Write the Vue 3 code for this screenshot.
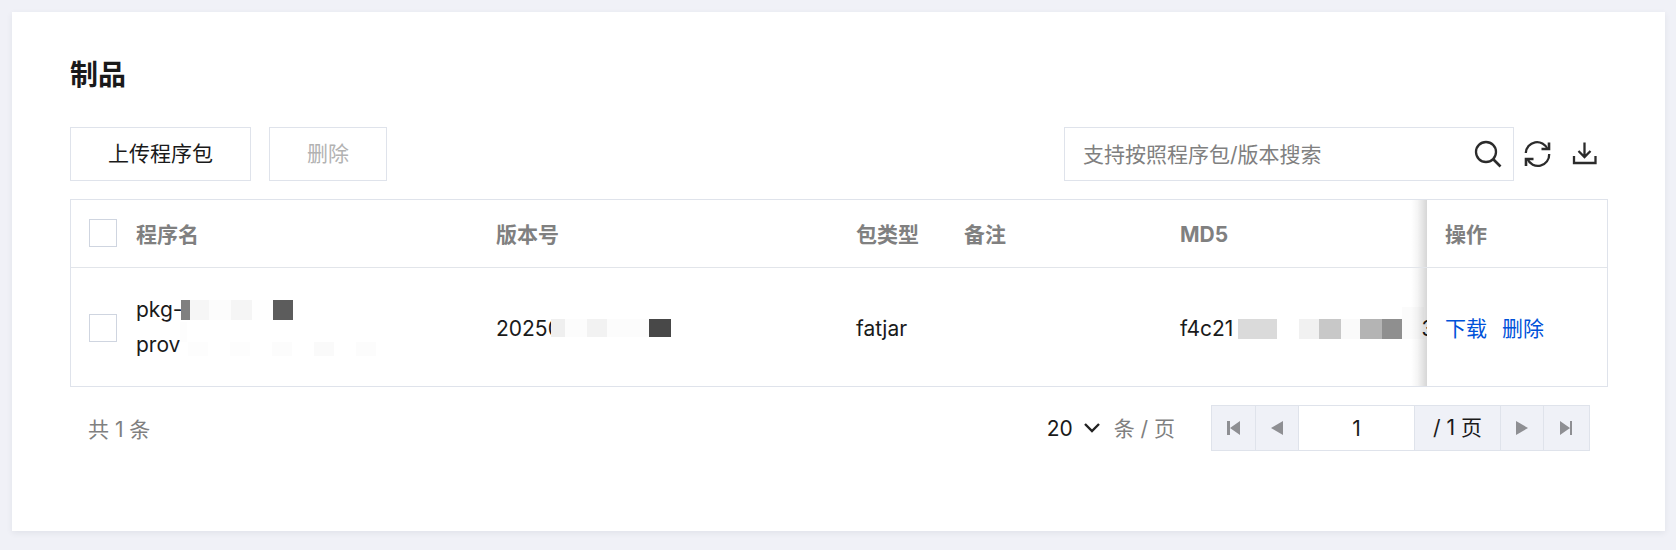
<script setup>
import { ref } from 'vue'

const keyword = ref('')
const page = ref('1')
const pageSize = ref('20')

// Pixel masks over private values: x, y, width, height, fill
const nameMask = [
  [0, 0, 9, 20, '#808080'],
  [9, 0, 19, 20, '#f6f6f6'],
  [28, 0, 22, 20, '#fcfcfc'],
  [50, 0, 21, 20, '#f5f5f5'],
  [71, 0, 21, 20, '#fefefe'],
  [92, 0, 20, 20, '#5c5c5c']
]
const providerMask = [
  [0, 0, 7, 20, '#fdfdfd'],
  [8, 20, 20, 14, '#fdfdfd'],
  [50, 20, 20, 14, '#fdfdfd'],
  [92, 20, 20, 14, '#fcfcfc'],
  [134, 20, 20, 14, '#fafafa'],
  [176, 20, 20, 14, '#fcfcfc']
]
const versionMask = [
  [0, 0, 14, 18, '#efefef'],
  [14, 0, 22, 18, '#fcfcfc'],
  [36, 0, 20, 18, '#f2f2f2'],
  [56, 0, 42, 18, '#fcfcfc'],
  [98, 0, 22, 18, '#484848']
]
const md5Mask = [
  [0, 12, 39, 20, '#dadada'],
  [39, 12, 22, 20, '#ffffff'],
  [61, 12, 20, 20, '#f1f1f1'],
  [81, 12, 22, 20, '#c8c8c8'],
  [103, 12, 19, 20, '#fafafa'],
  [122, 12, 22, 20, '#b4b4b4'],
  [144, 12, 20, 20, '#8f8f8f'],
  [164, 0, 22, 32, '#fbfbfb']
]
</script>

<template>
  <main class="page">
    <section class="card">
      <h1 class="title">制品</h1>

      <div class="toolbar">
        <button class="btn" type="button">上传程序包</button>
        <button class="btn" type="button" disabled>删除</button>
        <form class="search" role="search" @submit.prevent>
          <input v-model="keyword" type="text" aria-label="搜索" placeholder="支持按照程序包/版本搜索" />
          <button class="icon-btn" type="submit" aria-label="搜索">
            <svg width="28" height="28" viewBox="0 0 28 28" fill="none" stroke="#2b2b2b" stroke-width="2.300">
              <circle cx="12" cy="12" r="10" />
              <path d="M19 19l7.500 7.500" stroke-width="2.600" />
            </svg>
          </button>
        </form>
        <button class="icon-btn refresh" type="button" aria-label="刷新">
          <svg width="28" height="28" viewBox="0 0 28 28" fill="none" stroke="#2b2b2b" stroke-width="2.300">
            <path d="M2.800 13A11.300 11.300 0 0 1 24.500 9" />
            <path d="M26 2.500V9H18.500" stroke-width="2.600" />
            <path d="M26.200 14A11.300 11.300 0 0 1 4.500 19" />
            <path d="M3 26V19H10.500" stroke-width="2.600" />
          </svg>
        </button>
        <button class="icon-btn download" type="button" aria-label="下载">
          <svg width="28" height="28" viewBox="0 0 28 28" fill="none" stroke="#2b2b2b" stroke-width="2.300">
            <path d="M14.500 2.500v15M8.500 11l6 6 6-6" />
            <path d="M4 16v7h21.500v-7" />
          </svg>
        </button>
      </div>

      <div class="table-box">
        <table>
          <colgroup>
            <col class="c-check" />
            <col class="c-name" />
            <col class="c-version" />
            <col class="c-type" />
            <col class="c-note" />
            <col />
            <col class="c-action" />
          </colgroup>
          <thead>
            <tr>
              <th class="check"><input type="checkbox" aria-label="全选" /></th>
              <th>程序名</th>
              <th>版本号</th>
              <th>包类型</th>
              <th>备注</th>
              <th>MD5</th>
              <th class="fixed">操作</th>
            </tr>
          </thead>
          <tbody>
            <tr>
              <td class="check"><input type="checkbox" aria-label="选择程序包" /></td>
              <td class="name">
                <div class="line">
                  <span>pkg-</span>
                  <svg class="mask tight" width="112" height="20" aria-hidden="true">
                    <rect v-for="(r, i) in nameMask" :key="i" :x="r[0]" :y="r[1]" :width="r[2]" :height="r[3]" :fill="r[4]" />
                  </svg>
                </div>
                <div class="line">
                  <span>prov</span>
                  <svg class="mask" width="196" height="46" aria-hidden="true">
                    <rect v-for="(r, i) in providerMask" :key="i" :x="r[0]" :y="r[1]" :width="r[2]" :height="r[3]" :fill="r[4]" />
                  </svg>
                </div>
              </td>
              <td>
                <div class="line">
                  <span>20250</span>
                  <svg class="mask over" width="120" height="18" aria-hidden="true">
                    <rect v-for="(r, i) in versionMask" :key="i" :x="r[0]" :y="r[1]" :width="r[2]" :height="r[3]" :fill="r[4]" />
                  </svg>
                </div>
              </td>
              <td>fatjar</td>
              <td></td>
              <td class="md5">
                <div class="line">
                  <span>f4c21</span>
                  <svg class="mask gap" width="186" height="42" aria-hidden="true">
                    <rect v-for="(r, i) in md5Mask" :key="i" :x="r[0]" :y="r[1]" :width="r[2]" :height="r[3]" :fill="r[4]" />
                  </svg>
                  <span class="tail">3</span>
                </div>
              </td>
              <td class="fixed">
                <div class="actions"><a href="#download">下载</a><a href="#delete">删除</a></div>
              </td>
            </tr>
          </tbody>
        </table>
      </div>

      <footer class="footer">
        <span class="total">共 1 条</span>
        <label class="size">
          <span class="picker">
            <select v-model="pageSize" aria-label="每页条数">
              <option>20</option>
              <option>50</option>
            </select>
            <svg width="16" height="12" viewBox="0 0 16 12" fill="none" stroke="#222" stroke-width="2.400">
              <path d="M1 2l7 7 7-7" />
            </svg>
          </span>
          <span>条 / 页</span>
        </label>
        <nav class="pager" aria-label="分页">
          <button type="button" aria-label="首页">
            <svg width="14" height="16" viewBox="0 0 14 16" fill="#8e8f93"><path d="M0 1h3v14H0zM13 1v14L3 8z" /></svg>
          </button>
          <button type="button" aria-label="上一页">
            <svg width="14" height="16" viewBox="0 0 14 16" fill="#8e8f93"><path d="M13 1v14L1 8z" /></svg>
          </button>
          <input v-model="page" type="text" aria-label="页码" />
          <span class="pages">/ 1 页</span>
          <button type="button" aria-label="下一页">
            <svg width="14" height="16" viewBox="0 0 14 16" fill="#8e8f93"><path d="M1 1v14l12-7z" /></svg>
          </button>
          <button type="button" aria-label="末页">
            <svg width="14" height="16" viewBox="0 0 14 16" fill="#8e8f93"><path d="M10 1h2v14h-2zM0 1v14l10-7z" /></svg>
          </button>
        </nav>
      </footer>
    </section>
  </main>
</template>

<style>
body {
  background: #f0f1f7;
}
</style>

<style scoped>
.page {
  padding: 12px 11px 19px 12px;
  font-family: Inter, "Noto Sans CJK SC", sans-serif;
  font-size: 21px;
  line-height: 35px;
  color: #1a1a1a;
}
.card {
  padding: 43px 57px 80px 58px;
  background: #fff;
  box-shadow: 0 2px 6px rgba(54, 58, 80, 0.08);
}
.title {
  margin: 0 0 32px;
  font-size: 28px;
  line-height: 40px;
  font-weight: 700;
}
button,
input,
select {
  font: inherit;
  color: inherit;
  border-radius: 0;
  box-sizing: border-box;
}
.toolbar {
  display: flex;
  align-items: center;
}
.btn {
  height: 54px;
  margin-right: 18px;
  padding: 0 37px 1px;
  border: 1px solid #dfe3eb;
  background: #fff;
  white-space: nowrap;
}
.btn:disabled {
  color: #b2b2b2;
}
.search {
  display: flex;
  align-items: center;
  box-sizing: border-box;
  width: 450px;
  height: 54px;
  margin-left: auto;
  padding: 0 11px 0 18px;
  border: 1px solid #dfe3eb;
}
.search input {
  flex: 1;
  min-width: 0;
  padding: 0;
  border: 0;
  outline: 0;
  background: none;
}
.search input::placeholder {
  color: #808080;
  opacity: 1;
}
.icon-btn {
  padding: 0;
  border: 0;
  background: none;
  line-height: 0;
}
.refresh {
  margin-left: 9px;
}
.download {
  margin: 0 10px 0 19px;
}
.table-box {
  margin-top: 18px;
  border: 1px solid #dfe3eb;
}
table {
  width: 100%;
  table-layout: fixed;
  border-spacing: 0;
}
.c-check {
  width: 47px;
}
.c-name,
.c-version {
  width: 360px;
}
.c-type {
  width: 108px;
}
.c-note {
  width: 216px;
}
.c-action {
  width: 180px;
}
th,
td {
  padding: 0 0 0 18px;
  text-align: left;
  vertical-align: middle;
}
th {
  height: 65px;
  padding-top: 2px;
  border-bottom: 1px solid #e2e5ea;
  color: #808080;
  font-weight: 700;
}
td {
  padding-top: 25px;
  padding-bottom: 23px;
}
.name {
  padding-top: 24px;
  padding-bottom: 24px;
}
.check {
  line-height: 0;
}
th.check {
  padding-top: 0;
  padding-bottom: 2px;
}
.check input {
  appearance: none;
  width: 28px;
  height: 28px;
  margin: 0;
  border: 1px solid #cfd5e0;
  background: #fff;
}
.line {
  display: flex;
  align-items: center;
  height: 35px;
}
.mask {
  flex: none;
}
.tight {
  margin-left: -1px;
}
.over {
  margin-left: -10px;
}
.gap {
  margin-left: 5px;
}
.tail {
  margin-left: -3px;
}
.md5 {
  overflow: hidden;
}
.fixed {
  position: relative;
  background: #fff;
}
.fixed::before {
  content: "";
  position: absolute;
  top: 0;
  bottom: 0;
  right: 100%;
  width: 16px;
  background: linear-gradient(to left, rgba(0, 0, 0, 0.16), rgba(0, 0, 0, 0.04) 60%, transparent);
}
.actions {
  display: flex;
  gap: 15px;
}
.actions a {
  color: #0052d9;
  text-decoration: none;
}
.footer {
  display: flex;
  align-items: center;
  margin: 18px 18px 0;
}
.total {
  margin-right: auto;
  padding-top: 2px;
  color: #808080;
}
.size {
  display: flex;
  align-items: center;
  gap: 14px;
  margin-right: 36px;
  color: #808080;
}
.picker {
  display: flex;
  align-items: center;
  gap: 10px;
  color: #1a1a1a;
}
.picker select {
  appearance: none;
  padding: 0;
  border: 0;
  background: none;
}
.pager {
  display: flex;
  height: 46px;
  box-sizing: border-box;
  border: 1px solid #dfe3eb;
  background: #eff1f7;
}
.pager > * {
  border: 0;
  border-left: 1px solid #dfe3eb;
}
.pager > :first-child {
  border-left: 0;
}
.pager button {
  display: flex;
  align-items: center;
  justify-content: center;
  width: 43px;
  padding: 0;
  background: none;
}
.pager button:last-child {
  width: 46px;
}
.pager input {
  width: 116px;
  padding: 0;
  background: #fff;
  text-align: center;
}
.pages {
  padding: 0 18px;
  line-height: 44px;
  white-space: nowrap;
}
</style>
